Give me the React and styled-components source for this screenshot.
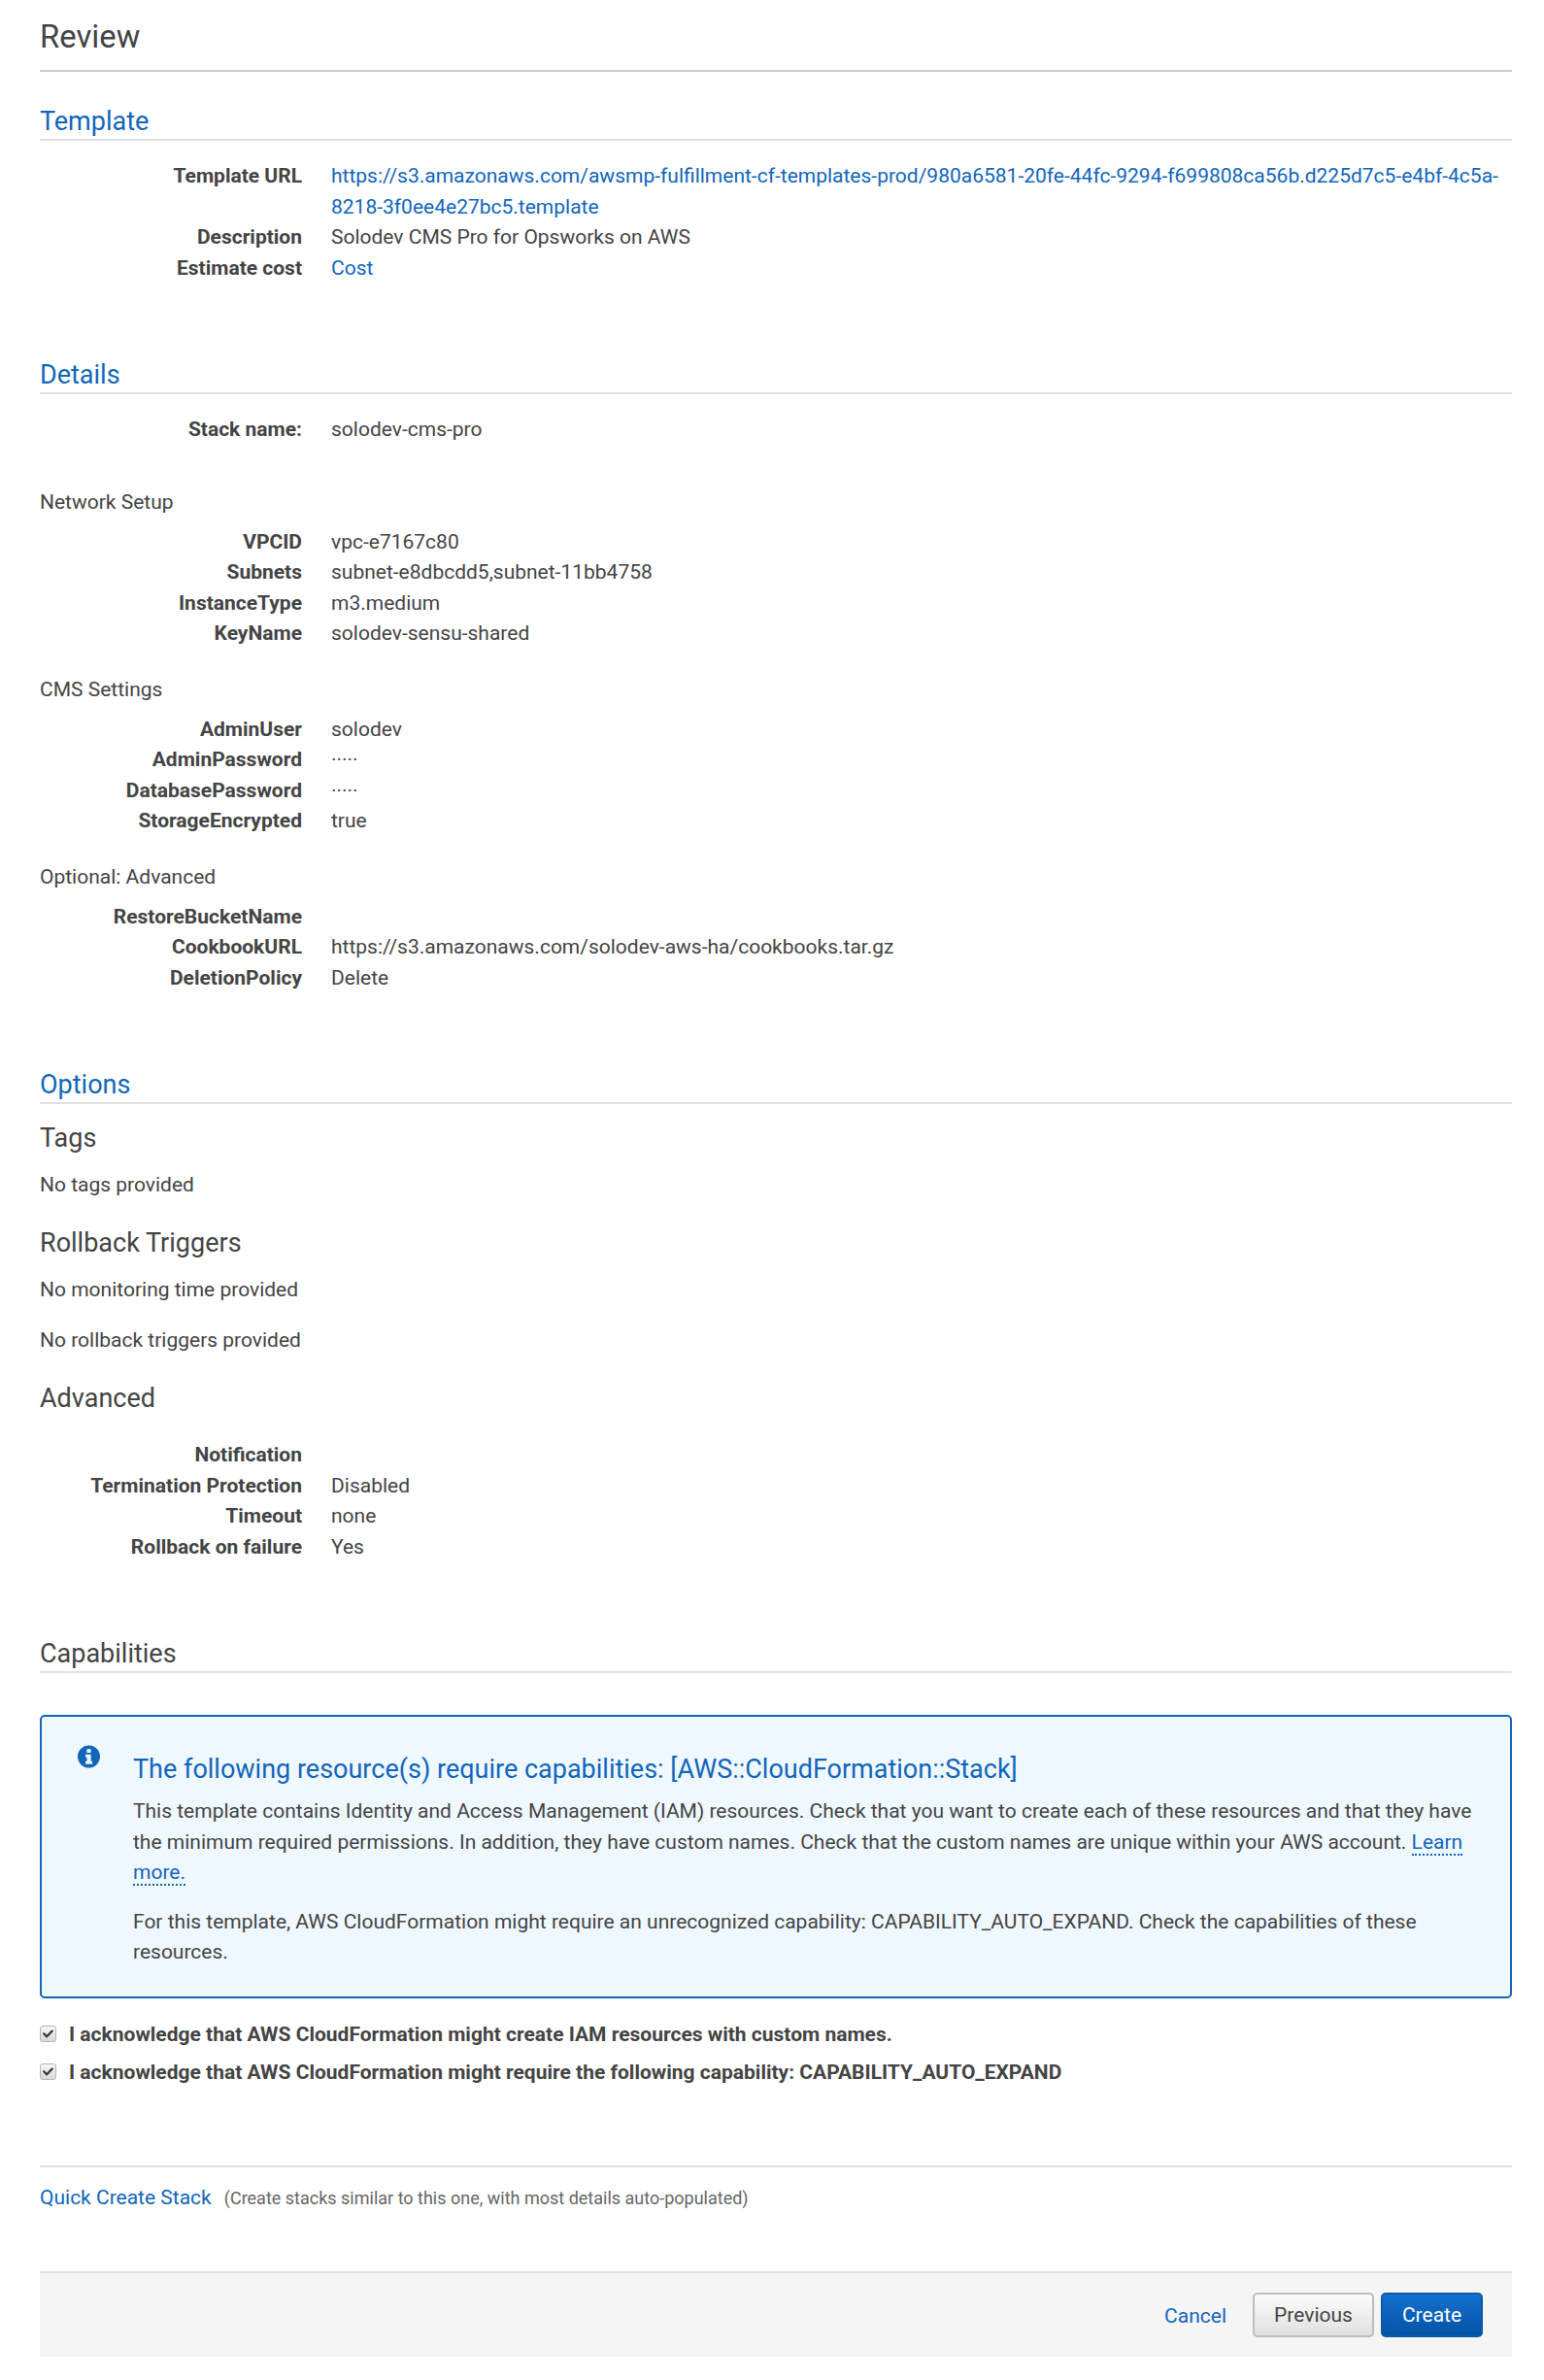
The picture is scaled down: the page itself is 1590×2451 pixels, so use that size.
import React from "react";
import styled, { createGlobalStyle } from "styled-components";
import { FaCheck } from "react-icons/fa";

const Global = createGlobalStyle`
  html, body { margin: 0; padding: 0; background: #fff; }
  body { font-family: Roboto, "Liberation Sans", sans-serif; font-size: 21px; line-height: 31.5px; color: #444; }
`;
const Page = styled.div`
  width: 1516px; margin-left: 41px; height: 2451px;
`;
const PageTitle = styled.h1`
  margin: 0; height: 74px; box-sizing: border-box; border-bottom: 2px solid #ccc;
  font-size: 32.8px; font-weight: 400; line-height: 77px; color: #444;
`;
const SectionHead = styled.h2`
  margin: ${p => p.$top}px 0 0; height: 40px; box-sizing: border-box; border-bottom: 2px solid #e1e1e1;
  font-size: 27px; font-weight: 400; line-height: 40px; color: ${p => p.$plain ? "#444" : "#1166bb"};
`;
const Rows = styled.dl`
  margin: ${p => p.$top ?? 0}px 0 0; padding: 0;
  display: grid; grid-template-columns: 270px 1fr; column-gap: 30px;
`;
const Label = styled.dt`
  font-weight: 700; text-align: right; margin: 0; color: #444;
`;
const Value = styled.dd`
  margin: 0; word-break: break-word; min-height: 31.5px;
`;
const Link = styled.a`
  color: #1166bb; text-decoration: none;
`;
const GroupTitle = styled.div`
  margin-top: ${p => p.$top}px; line-height: 31px;
`;
const SubHead = styled.h3`
  margin: ${p => p.$top}px 0 0; font-size: 27px; font-weight: 400; line-height: 36px; color: #444;
`;
const Para = styled.p`
  margin: ${p => p.$top}px 0 0; line-height: 31px;
`;
const Alert = styled.div`
  margin-top: 43px; height: 292px; box-sizing: border-box; display: flex;
  border: 2px solid #1166bb; border-radius: 5px; background: #f0f8ff;
  padding: 29px 30px 0 37px;
`;
const AlertIcon = styled.svg`
  width: 23px; height: 24px; margin-right: 34px; flex: none; display: block; color: #1166bb;
`;
const AlertBody = styled.div`
  flex: 1; min-width: 0;
`;
const AlertTitle = styled.div`
  font-size: 27px; line-height: 40px; color: #1166bb; margin-top: 5px;
`;
const AlertText = styled.p`
  margin: ${p => p.$top}px 0 0; line-height: 31.5px; font-size: 21px;
`;
const Learn = styled.a`
  color: #1166bb; text-decoration: none; border-bottom: 2px dotted #1166bb;
`;
const Ack = styled.label`
  display: flex; align-items: center; font-weight: 700; height: 39px; color: #444;
  margin-top: ${p => p.$top ?? 0}px;
`;
const Box = styled.span`
  width: 17px; height: 17px; box-sizing: border-box; flex: none; margin-right: 13px; margin-top: -3px;
  display: flex; align-items: center; justify-content: center;
  border: 1px solid #b5b5b5; border-radius: 3px; color: #333; font-size: 11px;
  background: linear-gradient(#f6f6f6, #d9d9d9);
`;
const QuickRow = styled.div`
  margin-top: 76px; height: 109px; box-sizing: border-box; border-top: 2px solid #e1e1e1;
  display: flex; align-items: baseline; padding-top: 16px;
`;
const Hint = styled.span`
  margin-left: 13px; font-size: 18px; color: #666;
`;
const Footer = styled.div`
  height: 88px; box-sizing: border-box; border-top: 2px solid #e1e1e1; background: #f5f5f5;
  display: flex; align-items: center; justify-content: flex-end; padding: 0 30px 0 0; margin-top: 0;
`;
const Cancel = styled(Link)`
  margin-right: 27px; position: relative; top: 2px;
`;
const Button = styled.button`
  height: 46px; box-sizing: border-box; font: 400 21px Roboto, sans-serif; border-radius: 5px; padding: 0;
  width: ${p => p.$w}px; margin-left: ${p => p.$gap ?? 0}px;
  color: ${p => p.$primary ? "#fff" : "#444"};
  border: 2px solid ${p => p.$primary ? "#0b5aa8" : "#bdbdbd"};
  background: ${p => p.$primary ? "linear-gradient(#1270cf, #0553a6)" : "linear-gradient(#fcfcfc, #e0e0e0)"};
`;

const R = ({ k, children }) => (<><Label>{k}</Label><Value>{children}</Value></>);

export default function App() {
  return (
    <Page>
      <Global />
      <PageTitle>Review</PageTitle>
      <SectionHead $top={31}>Template</SectionHead>
      <Rows $top={21}>
        <R k="Template URL"><Link>https://s3.amazonaws.com/awsmp-fulfillment-cf-templates-prod/980a6581-20fe-44fc-9294-f699808ca56b.d225d7c5-e4bf-4c5a-8218-3f0ee4e27bc5.template</Link></R>
        <R k="Description">Solodev CMS Pro for Opsworks on AWS</R>
        <R k="Estimate cost"><Link>Cost</Link></R>
      </Rows>
      <SectionHead $top={74}>Details</SectionHead>
      <Rows $top={21}>
        <R k="Stack name:">solodev-cms-pro</R>
      </Rows>
      <GroupTitle $top={43}>Network Setup</GroupTitle>
      <Rows $top={10}>
        <R k="VPCID">vpc-e7167c80</R>
        <R k="Subnets">subnet-e8dbcdd5,subnet-11bb4758</R>
        <R k="InstanceType">m3.medium</R>
        <R k="KeyName">solodev-sensu-shared</R>
      </Rows>
      <GroupTitle $top={26}>CMS Settings</GroupTitle>
      <Rows $top={10}>
        <R k="AdminUser">solodev</R>
        <R k="AdminPassword">·····</R>
        <R k="DatabasePassword">·····</R>
        <R k="StorageEncrypted">true</R>
      </Rows>
      <GroupTitle $top={26}>Optional: Advanced</GroupTitle>
      <Rows $top={10}>
        <R k="RestoreBucketName"></R>
        <R k="CookbookURL">https://s3.amazonaws.com/solodev-aws-ha/cookbooks.tar.gz</R>
        <R k="DeletionPolicy">Delete</R>
      </Rows>
      <SectionHead $top={74}>Options</SectionHead>
      <SubHead $top={17}>Tags</SubHead>
      <Para $top={15}>No tags provided</Para>
      <SubHead $top={26}>Rollback Triggers</SubHead>
      <Para $top={15}>No monitoring time provided</Para>
      <Para $top={21}>No rollback triggers provided</Para>
      <SubHead $top={26}>Advanced</SubHead>
      <Rows $top={25}>
        <R k="Notification"></R>
        <R k="Termination Protection">Disabled</R>
        <R k="Timeout">none</R>
        <R k="Rollback on failure">Yes</R>
      </Rows>
      <SectionHead $top={74} $plain>Capabilities</SectionHead>
      <Alert>
        <AlertIcon viewBox="0 0 24 24" aria-hidden="true">
          <path
            fill="currentColor"
            fillRule="evenodd"
            d="M12 0a12 12 0 1 0 0 24a12 12 0 0 0 0-24ZM9.8 3.8h4.4v3.9H9.8ZM8.4 9.6h5.8v7.3h1.5v3.2H8.4v-3.2h1.5v-4.1H8.4Z"
          />
        </AlertIcon>
        <AlertBody>
          <AlertTitle>The following resource(s) require capabilities: [AWS::CloudFormation::Stack]</AlertTitle>
          <AlertText $top={8}>This template contains Identity and Access Management (IAM) resources. Check that you want to create each of these resources and that they have the minimum required permissions. In addition, they have custom names. Check that the custom names are unique within your AWS account. <Learn>Learn more.</Learn></AlertText>
          <AlertText $top={19}>For this template, AWS CloudFormation might require an unrecognized capability: CAPABILITY_AUTO_EXPAND. Check the capabilities of these resources.</AlertText>
        </AlertBody>
      </Alert>
      <Ack $top={18}><Box><FaCheck /></Box>I acknowledge that AWS CloudFormation might create IAM resources with custom names.</Ack>
      <Ack><Box><FaCheck /></Box>I acknowledge that AWS CloudFormation might require the following capability: CAPABILITY_AUTO_EXPAND</Ack>
      <QuickRow><Link>Quick Create Stack</Link><Hint>(Create stacks similar to this one, with most details auto-populated)</Hint></QuickRow>
      <Footer>
        <Cancel>Cancel</Cancel>
        <Button $w={125}>Previous</Button>
        <Button $w={105} $gap={7} $primary>Create</Button>
      </Footer>
    </Page>
  );
}
